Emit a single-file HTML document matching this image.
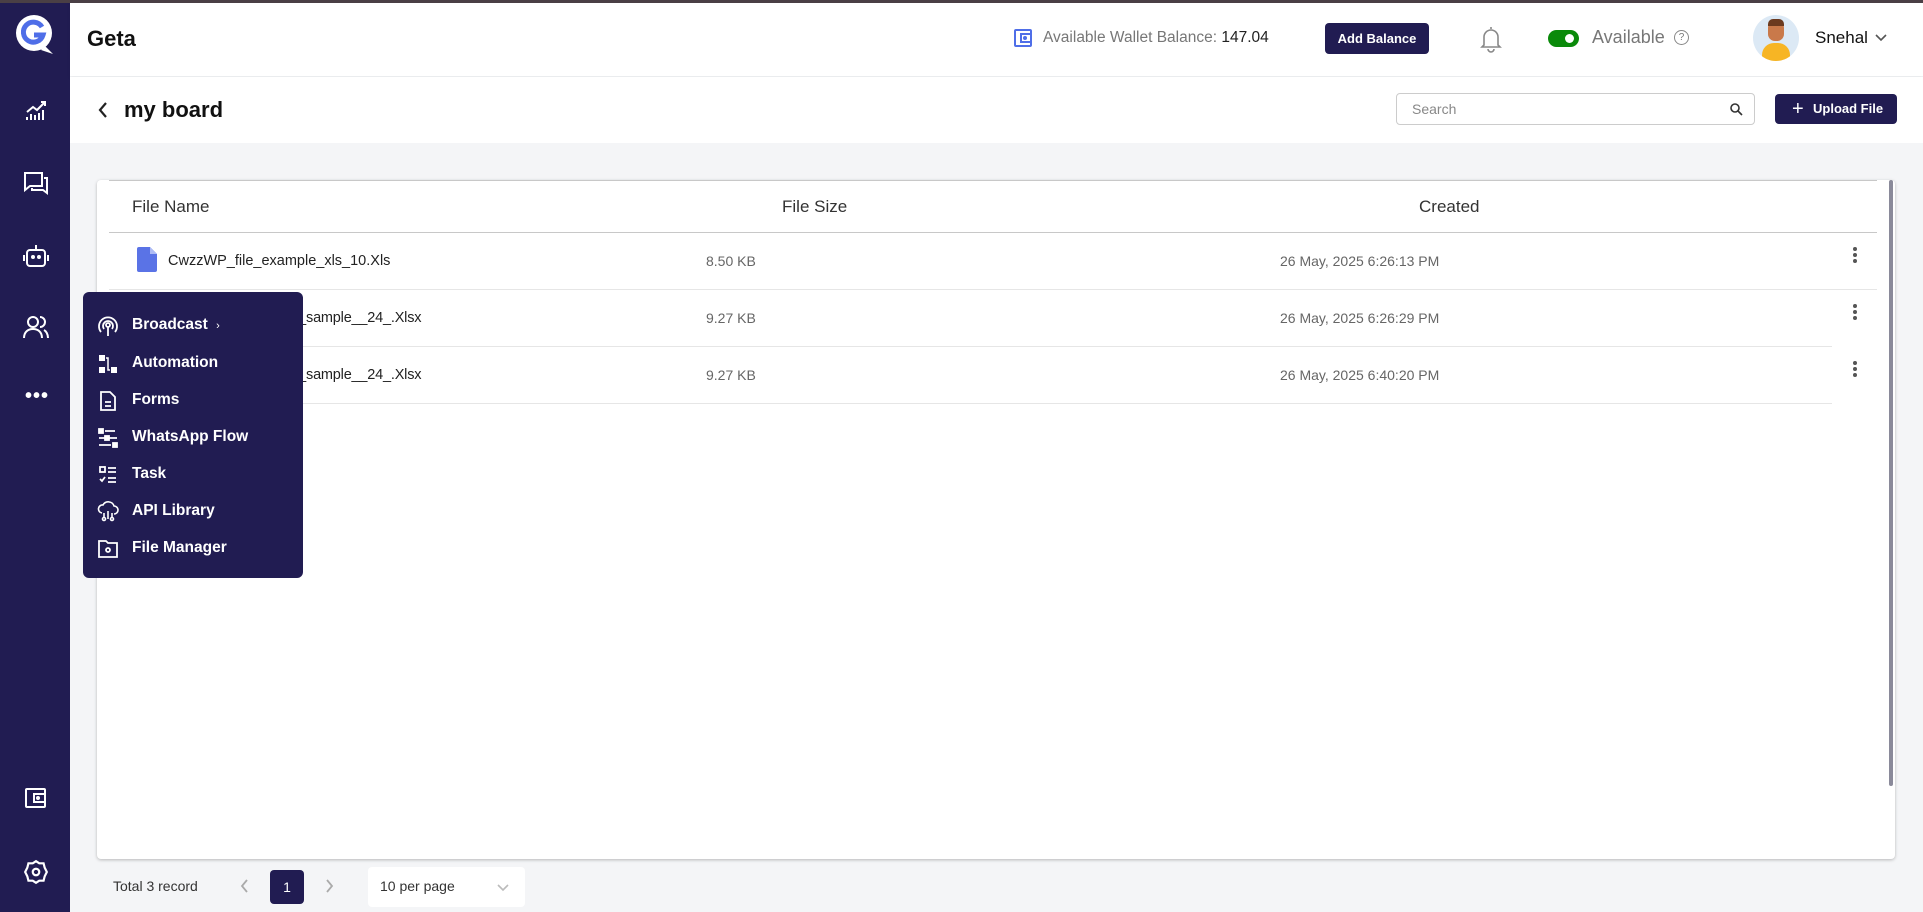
<!DOCTYPE html>
<html><head><meta charset="utf-8"><style>
*{box-sizing:border-box;margin:0;padding:0}
body{width:1923px;height:912px;overflow:hidden;background:#f4f5f7;font-family:"Liberation Sans",sans-serif;position:relative;color:#222}
.abs{position:absolute}
.side{left:0;top:0;width:70px;height:912px;background:#211c52}
.top{left:0;top:0;width:1923px;height:3px;background:#4a3f45;z-index:5}
.hdr{left:70px;top:0;width:1853px;height:76px;background:#fff;box-shadow:0 2px 4px rgba(0,0,0,.05)}
.sub{left:70px;top:77px;width:1853px;height:66px;background:#fff}
.card{left:97px;top:180px;width:1798px;height:679px;background:#fff;border-radius:4px;box-shadow:0 1px 3px rgba(0,0,0,.25)}
.t{position:absolute;white-space:nowrap}
.line{position:absolute;height:1px;background:#ddd}
.menu{left:83px;top:292px;width:220px;height:286px;background:#211c52;border-radius:6px;z-index:4}
.mi{position:absolute;left:49px;color:#fff;font-size:15.5px;font-weight:bold}
.mic{position:absolute;left:14px;width:22px;height:22px}
svg{display:block}
</style></head><body>
<div class="abs top"></div>
<div class="abs side">
 <svg class="abs" style="left:15px;top:14px" width="40" height="42" viewBox="0 0 40 42"><circle cx="19" cy="19" r="18" fill="#fff"/><path d="M30 32 L38 40 L26 36Z" fill="#fff"/><path d="M27 13 A10 10 0 1 0 28 21 H19" fill="none" stroke="#4f6ee8" stroke-width="5"/></svg>
 <svg class="abs" style="left:24px;top:98px" width="24" height="24" viewBox="0 0 24 24" fill="none" stroke="#fff" stroke-width="2"><path d="M3 22v-3M7 22v-6M11 22v-5M15 22v-7M19 22v-10M3 14l6-5 4 3 8-8M17 4h4v4"/></svg>
 <svg class="abs" style="left:23px;top:170px" width="26" height="26" viewBox="0 0 26 26" fill="none" stroke="#fff" stroke-width="2"><path d="M2 3h17v13H7l-5 4z"/><path d="M21 8h3v15l-4-3H9v-2"/></svg>
 <svg class="abs" style="left:22px;top:242px" width="28" height="28" viewBox="0 0 28 28" fill="none" stroke="#fff" stroke-width="2"><rect x="5" y="8" width="18" height="16" rx="3"/><path d="M14 8V3M2 13v6M26 13v6"/><circle cx="11" cy="15" r="1" fill="#fff"/><circle cx="17" cy="15" r="1" fill="#fff"/></svg>
 <svg class="abs" style="left:23px;top:314px" width="26" height="26" viewBox="0 0 26 26" fill="none" stroke="#fff" stroke-width="2"><circle cx="10" cy="8" r="5"/><path d="M1 24c0-6 4-9 9-9s9 3 9 9M17 3a5 5 0 0 1 0 10M21 16c2 1 4 4 4 8"/></svg>
 <div class="t" style="left:25px;top:385px;color:#fff;font-size:20px;font-weight:bold;letter-spacing:1px">•••</div>
 <svg class="abs" style="left:24px;top:786px" width="24" height="24" viewBox="0 0 24 24" fill="none" stroke="#fff" stroke-width="2"><rect x="2" y="3" width="19" height="18" rx="1"/><rect x="10" y="8" width="11" height="8"/><circle cx="14" cy="12" r="1" fill="#fff"/></svg>
 <svg class="abs" style="left:23px;top:859px" width="26" height="26" viewBox="0 0 24 24" fill="none" stroke="#fff" stroke-width="2"><path d="M12 2l3 2 4 0 1 4 2 4-2 4-1 4-4 0-3 2-3-2-4 0-1-4-2-4 2-4 1-4 4 0z"/><circle cx="12" cy="12" r="3"/></svg>
</div>
<div class="abs hdr">
 <div class="t" style="left:17px;top:26px;font-size:22px;font-weight:bold;color:#111">Geta</div>
 <svg class="abs" style="left:943px;top:28px" width="20" height="20" viewBox="0 0 20 20" fill="none" stroke="#4f6ee8" stroke-width="2"><rect x="2" y="2" width="16" height="16" rx="1"/><rect x="8" y="6" width="10" height="8"/><circle cx="12" cy="10" r="1"/></svg>
 <div class="t" style="left:973px;top:29px;font-size:15.5px;color:#777">Available Wallet Balance: <span style="color:#222">147.04</span></div>
 <div class="t" style="left:1255px;top:23px;width:104px;height:31px;background:#211c52;border-radius:4px;color:#fff;font-size:13px;font-weight:bold;text-align:center;line-height:31px">Add Balance</div>
 <svg class="abs" style="left:1409px;top:25px" width="24" height="28" viewBox="0 0 24 28" fill="none" stroke="#888" stroke-width="1.6"><path d="M12 2v2M5 20V12a7 7 0 0 1 14 0v8l2 2H3zM9 24a3 3 0 0 0 6 0"/></svg>
 <div class="abs" style="left:1478px;top:30px;width:31px;height:17px;border-radius:9px;background:#0a8a0a"><div class="abs" style="left:17px;top:4px;width:9px;height:9px;border-radius:50%;background:#fff"></div></div>
 <div class="t" style="left:1522px;top:27px;font-size:18px;color:#777">Available</div>
 <div class="t" style="left:1604px;top:30px;width:15px;height:15px;border:1.4px solid #888;border-radius:50%;font-size:10px;color:#777;text-align:center;line-height:13px">?</div>
 <div class="abs" style="left:1683px;top:15px;width:46px;height:46px;border-radius:50%;background:#dce9f5;overflow:hidden">
  <div class="abs" style="left:15px;top:6px;width:16px;height:20px;border-radius:7px;background:#c9794a"></div>
  <div class="abs" style="left:15px;top:4px;width:16px;height:7px;border-radius:5px 5px 0 0;background:#6b3a1f"></div>
  <div class="abs" style="left:9px;top:28px;width:28px;height:22px;border-radius:12px 12px 0 0;background:#f7b524"></div>
 </div>
 <div class="t" style="left:1745px;top:28px;font-size:17px;color:#111">Snehal</div>
 <svg class="abs" style="left:1804px;top:33px" width="14" height="10" viewBox="0 0 14 10" fill="none" stroke="#555" stroke-width="1.6"><path d="M2 2l5 5 5-5"/></svg>
</div>
<div class="abs sub">
 <svg class="abs" style="left:27px;top:24px" width="12" height="18" viewBox="0 0 12 18" fill="none" stroke="#222" stroke-width="2.2"><path d="M9 2L3 9l6 7"/></svg>
 <div class="t" style="left:54px;top:20px;font-size:22px;font-weight:bold;color:#111">my board</div>
 <div class="abs" style="left:1326px;top:16px;width:359px;height:32px;border:1px solid #ccc;border-radius:4px;background:#fff">
  <div class="t" style="left:15px;top:7px;font-size:14px;color:#888">Search</div>
  <svg class="abs" style="left:333px;top:9px" width="13" height="13" viewBox="0 0 13 13" fill="none" stroke="#333" stroke-width="1.6"><circle cx="5" cy="5" r="4"/><path d="M8 8l4 4"/></svg>
 </div>
 <div class="abs" style="left:1705px;top:17px;width:122px;height:30px;background:#211c52;border-radius:4px;color:#fff;font-size:13px;font-weight:bold;line-height:30px;padding-left:38px">Upload File<div class="abs" style="left:17px;top:0;font-size:20px;font-weight:normal">+</div></div>
</div>
<div class="abs card">
 <div class="line" style="left:12px;top:0;width:1768px;background:#c8c8c8"></div>
 <div class="t" style="left:35px;top:17px;font-size:17px;color:#333">File Name</div>
 <div class="t" style="left:685px;top:17px;font-size:17px;color:#333">File Size</div>
 <div class="t" style="left:1322px;top:17px;font-size:17px;color:#333">Created</div>
 <div class="line" style="left:12px;top:52px;width:1768px;background:#c8c8c8"></div>
 <div class="abs" style="right:2px;top:0;width:4px;height:606px;background:#8a8a9a;border-radius:2px"></div>
 <svg class="abs" style="left:40px;top:67px" width="20" height="25" viewBox="0 0 20 25"><path d="M2 0h11l7 7v16a2 2 0 0 1-2 2H2a2 2 0 0 1-2-2V2a2 2 0 0 1 2-2z" fill="#5a73e6"/><path d="M13 0v7h7" fill="#aebcf5"/></svg>
 <div class="t" style="left:71px;top:73px;font-size:14.5px;color:#222">CwzzWP_file_example_xls_10.Xls</div>
 <div class="t" style="left:609px;top:73px;font-size:14px;color:#666">8.50 KB</div>
 <div class="t" style="left:1183px;top:73px;font-size:14px;color:#666">26 May, 2025 6:26:13 PM</div>
 <div class="line" style="left:12px;top:109px;width:1768px;background:#e6e6e6"></div>
 <div class="t" style="left:71px;top:130px;font-size:14.5px;color:#222;letter-spacing:-0.2px">CwzzWP_file_import_sample__24_.Xlsx</div>
 <div class="t" style="left:609px;top:130px;font-size:14px;color:#666">9.27 KB</div>
 <div class="t" style="left:1183px;top:130px;font-size:14px;color:#666">26 May, 2025 6:26:29 PM</div>
 <div class="line" style="left:12px;top:166px;width:1723px;background:#e6e6e6"></div>
 <div class="t" style="left:71px;top:187px;font-size:14.5px;color:#222;letter-spacing:-0.2px">CwzzWP_file_import_sample__24_.Xlsx</div>
 <div class="t" style="left:609px;top:187px;font-size:14px;color:#666">9.27 KB</div>
 <div class="t" style="left:1183px;top:187px;font-size:14px;color:#666">26 May, 2025 6:40:20 PM</div>
 <div class="line" style="left:12px;top:223px;width:1723px;background:#e6e6e6"></div>
 <svg class="abs" style="left:1755px;top:66px" width="6" height="160" viewBox="0 0 6 160" fill="#555"><circle cx="3" cy="3" r="2"/><circle cx="3" cy="9" r="2"/><circle cx="3" cy="15" r="2"/><circle cx="3" cy="60" r="2"/><circle cx="3" cy="66" r="2"/><circle cx="3" cy="72" r="2"/><circle cx="3" cy="117" r="2"/><circle cx="3" cy="123" r="2"/><circle cx="3" cy="129" r="2"/></svg>
</div>
<div class="abs menu">
 <svg class="mic" style="top:23px" viewBox="0 0 22 22" fill="none" stroke="#fff" stroke-width="1.8"><circle cx="11" cy="10" r="2"/><path d="M11 12v9M7 14a5 5 0 1 1 8 0M4 17a9 9 0 1 1 14 0"/></svg>
 <div class="mi" style="top:24px">Broadcast <span style="font-size:11px;font-weight:normal;margin-left:4px">›</span></div>
 <svg class="mic" style="top:61px" viewBox="0 0 22 22" fill="#fff"><rect x="2" y="2" width="6" height="6"/><rect x="2" y="14" width="6" height="6"/><rect x="14" y="14" width="6" height="6"/><path d="M9 5h2v12h2" stroke="#fff" fill="none" stroke-width="1.5"/></svg>
 <div class="mi" style="top:62px">Automation</div>
 <svg class="mic" style="top:98px" viewBox="0 0 22 22" fill="none" stroke="#fff" stroke-width="1.8"><path d="M4 2h9l5 5v13H4zM8 12h6M8 16h6"/></svg>
 <div class="mi" style="top:99px">Forms</div>
 <svg class="mic" style="top:135px" viewBox="0 0 22 22" fill="none" stroke="#fff" stroke-width="1.8"><rect x="2" y="2" width="4" height="4" fill="#fff"/><path d="M8 4h10M2 11h6M12 11h8M2 18h12"/><rect x="8" y="9" width="4" height="4" fill="#fff"/><rect x="16" y="16" width="4" height="4" fill="#fff"/></svg>
 <div class="mi" style="top:136px">WhatsApp Flow</div>
 <svg class="mic" style="top:172px" viewBox="0 0 22 22" fill="none" stroke="#fff" stroke-width="1.8"><rect x="3" y="3" width="5" height="5"/><path d="M11 4h8M11 8h8M11 14h8M11 18h8M3 15l2 2 3-4"/></svg>
 <div class="mi" style="top:173px">Task</div>
 <svg class="mic" style="top:208px" viewBox="0 0 22 22" fill="none" stroke="#fff" stroke-width="1.6"><path d="M5 13a4 4 0 0 1 1-8 6 6 0 0 1 11 1 4 4 0 0 1 0 8M7 13v4M11 11v8M15 13v4"/><circle cx="7" cy="19" r="1.5"/><circle cx="15" cy="19" r="1.5"/></svg>
 <div class="mi" style="top:210px">API Library</div>
 <svg class="mic" style="top:246px" viewBox="0 0 22 22" fill="none" stroke="#fff" stroke-width="1.8"><path d="M2 3h7l2 2h9v14H2z"/><circle cx="11" cy="12" r="2"/></svg>
 <div class="mi" style="top:247px">File Manager</div>
</div>
<div class="t" style="left:113px;top:878px;font-size:14px;color:#333">Total 3 record</div>
<svg class="abs" style="left:239px;top:878px" width="10" height="16" viewBox="0 0 10 16" fill="none" stroke="#aaa" stroke-width="1.8"><path d="M8 2L3 8l5 6"/></svg>
<div class="abs" style="left:270px;top:870px;width:34px;height:34px;background:#211c52;border-radius:4px;color:#fff;font-size:14px;text-align:center;line-height:34px">1</div>
<svg class="abs" style="left:325px;top:878px" width="10" height="16" viewBox="0 0 10 16" fill="none" stroke="#aaa" stroke-width="1.8"><path d="M2 2l5 6-5 6"/></svg>
<div class="abs" style="left:368px;top:867px;width:157px;height:40px;background:#fff;border-radius:4px">
 <div class="t" style="left:12px;top:11px;font-size:14px;color:#333">10 per page</div>
 <svg class="abs" style="left:128px;top:16px" width="14" height="10" viewBox="0 0 14 10" fill="none" stroke="#bbb" stroke-width="1.6"><path d="M2 2l5 5 5-5"/></svg>
</div>
</body></html>
